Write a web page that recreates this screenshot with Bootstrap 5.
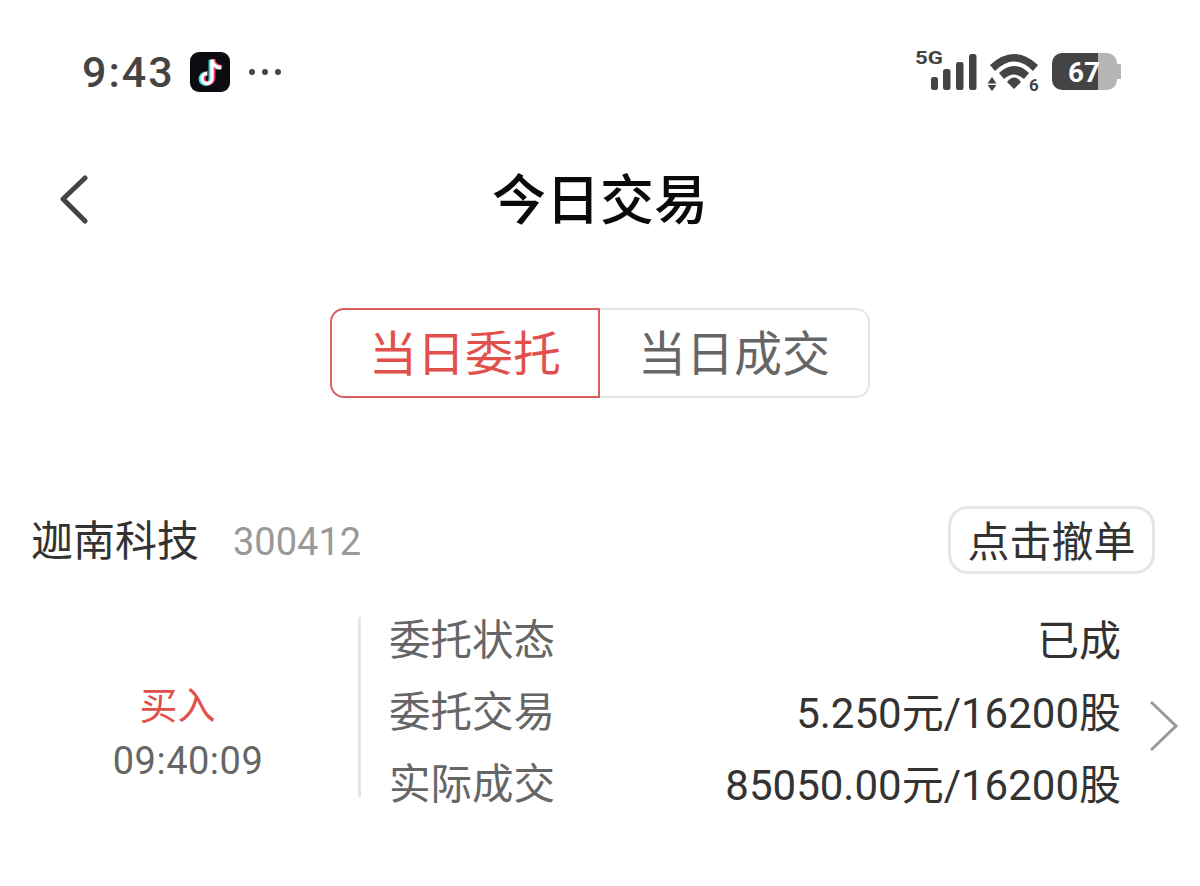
<!DOCTYPE html>
<html lang="zh-CN">
<head>
<meta charset="UTF-8">
<meta name="viewport" content="width=device-width, initial-scale=1">
<title>今日交易</title>
<link href="https://cdn.jsdelivr.net/npm/bootstrap@5.3.2/dist/css/bootstrap.min.css" rel="stylesheet">
<style>
body { font-family: "Roboto", "Noto Sans CJK SC", sans-serif; background: #fff; width: 1200px; height: 886px; overflow: hidden; }
.status-row { height: 144px; padding: 0 79px 0 82px; color: #444; }
.clock { font-size: 43px; font-weight: 500; letter-spacing: 2px; line-height: 1; }
.tiktok-icon { margin-left: 15px; }
.dots { gap: 7px; margin-left: 19px; }
.dots i { width: 6px; height: 6px; border-radius: 50%; background: #444; display: block; }
.title-row { height: 116px; padding: 0 60px; }
.page-title { font-size: 54px; font-weight: 500; color: #0a0a0a; line-height: 1; }
.title-side { width: 30px; }
.back-icon { margin-bottom: 4px; }
.tabs-row { margin-top: 48px; }
.tab-btn { width: 270px; height: 90px; font-size: 48px; color: #666; border: 2px solid #e6e6e6; background: #fff; line-height: 1; padding: 4px 0 0; }
.tab-on { color: #e2504c; border-color: #d9605c; border-radius: 14px 0 0 14px; }
.tab-off { border-left: 0; border-radius: 0 14px 14px 0; }
.stock-row { margin-top: 108px; padding: 0 45px 0 31px; }
.stock-name { font-size: 42px; color: #333; line-height: 1; padding-top: 4px; }
.stock-code { font-size: 38px; color: #999; margin-left: 34px; line-height: 1; padding-top: 4px; }
.cancel-btn { width: 207px; height: 68px; border: 3px solid #e6e6e6; border-radius: 20px; font-size: 42px; color: #333; background: #fff; line-height: 1; padding: 5px 0 0; }
.order-row { margin-top: 43px; height: 180px; }
.side-col { width: 361px; border-right: 3px solid #e6e6e6; height: 180px; padding-top: 70px; }
.side-text { font-size: 38px; color: #e2504c; line-height: 1; margin-left: -3px; }
.side-time { font-size: 38px; color: #666; line-height: 1; margin-top: 17px; margin-left: 18px; letter-spacing: .5px; }
.detail-col { width: 760px; padding-left: 28px; margin-top: -12px; height: 216px; }
.detail-line { height: 72px; }
.detail-key { font-size: 41.5px; color: #666; }
.detail-val { font-size: 42px; color: #333; }
.arrow-col { margin-left: 28px; padding-top: 83px; }
</style>
</head>
<body class="m-0 p-0">
  <div class="status-row d-flex align-items-center justify-content-between">
    <div class="d-flex align-items-center">
      <span class="clock">9:43</span>
      <svg class="tiktok-icon" width="40" height="40" viewBox="0 0 40 40">
        <rect width="40" height="40" rx="9" fill="#0b0b12"/>
        <path d="M22 7v19a5 5 0 1 1-5-5M22 7c.5 5 4 8 9 8" fill="none" stroke="#25e0e0" stroke-width="4.5" transform="translate(-1.2 .8)"/>
        <path d="M22 7v19a5 5 0 1 1-5-5M22 7c.5 5 4 8 9 8" fill="none" stroke="#f03a5f" stroke-width="4.5" transform="translate(1.2 .2)"/>
        <path d="M22 7v19a5 5 0 1 1-5-5M22 7c.5 5 4 8 9 8" fill="none" stroke="#fff" stroke-width="3.4" transform="translate(0 .5)"/>
      </svg>
      <span class="dots d-flex"><i></i><i></i><i></i></span>
    </div>
    <svg width="210" height="60" viewBox="0 0 210 60">
      <g transform="translate(4 8)">
        <text x="0" y="14" font-family="Roboto" font-size="18" font-weight="700" fill="#444" textLength="28" lengthAdjust="spacingAndGlyphs">5G</text>
        <g fill="#444">
          <rect x="16" y="27" width="7" height="13" rx="2.5"/>
          <rect x="28" y="19" width="7.500" height="21" rx="2.5"/>
          <rect x="41" y="12" width="7.500" height="28" rx="2.5"/>
          <rect x="54" y="4" width="7.500" height="36" rx="2.5"/>
          <path d="M75 15Q99-7 123 15L118 21Q99 2 80 21Z"/>
          <path d="M84 23Q99 9 114 23L109 29Q99 20 89 29Z"/>
          <path d="M92 32Q99 23 106 32L99 39Z"/>
          <path d="M72.500 33.500l4.500-6.500 4.500 6.500zM72.500 35h9l-4.500 6z"/>
        </g>
        <text x="114" y="41" font-family="Roboto" font-size="17" font-weight="700" fill="#444">6</text>
        <path d="M183 3h9a10 10 0 0 1 10 10v1h4v15h-4v1a10 10 0 0 1-10 10h-9z" fill="#b5b5b5"/>
        <path d="M183 3h-36a10 10 0 0 0-10 10v17a10 10 0 0 0 10 10h36z" fill="#444"/>
        <text x="153" y="32" font-family="Roboto" font-size="28" font-weight="700" fill="#fff">67</text>
      </g>
    </svg>
  </div>

  <div class="title-row d-flex align-items-center justify-content-between">
    <svg class="title-side back-icon" width="30" height="50" viewBox="0 0 30 50"><path d="M25 3L3 24l22 22" fill="none" stroke="#444" stroke-width="5" stroke-linecap="round" stroke-linejoin="round"/></svg>
    <div class="page-title">今日交易</div>
    <div class="title-side"></div>
  </div>

  <div class="tabs-row d-flex justify-content-center">
    <button type="button" class="tab-btn tab-on">当日委托</button>
    <button type="button" class="tab-btn tab-off">当日成交</button>
  </div>

  <div class="stock-row d-flex align-items-center justify-content-between">
    <div class="d-flex align-items-center">
      <span class="stock-name">迦南科技</span>
      <span class="stock-code">300412</span>
    </div>
    <button type="button" class="cancel-btn">点击撤单</button>
  </div>

  <div class="order-row d-flex">
    <div class="side-col text-center flex-shrink-0">
      <div class="side-text">买入</div>
      <div class="side-time">09:40:09</div>
    </div>
    <div class="detail-col flex-shrink-0">
      <div class="detail-line d-flex align-items-center justify-content-between"><span class="detail-key">委托状态</span><span class="detail-val">已成</span></div>
      <div class="detail-line d-flex align-items-center justify-content-between"><span class="detail-key">委托交易</span><span class="detail-val">5.250元/16200股</span></div>
      <div class="detail-line d-flex align-items-center justify-content-between"><span class="detail-key">实际成交</span><span class="detail-val">85050.00元/16200股</span></div>
    </div>
    <div class="arrow-col">
      <svg class="d-block" width="30" height="52" viewBox="0 0 30 52"><path d="M2 2l25 24L2 50" fill="none" stroke="#999" stroke-width="3"/></svg>
    </div>
  </div>

  <script src="https://cdn.jsdelivr.net/npm/bootstrap@5.3.2/dist/js/bootstrap.bundle.min.js"></script>
</body>
</html>
